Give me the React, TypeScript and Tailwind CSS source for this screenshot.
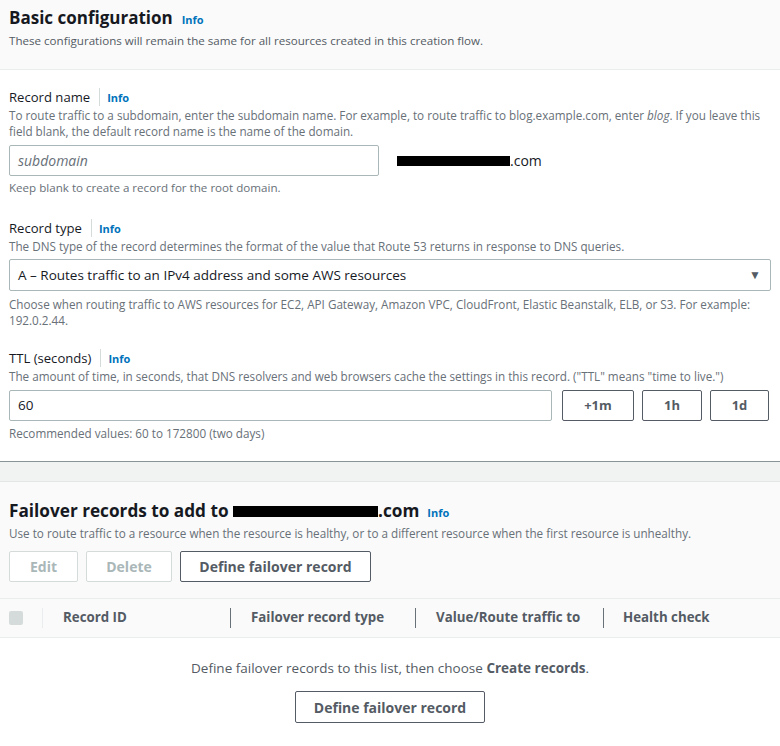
import React from "react";

const cond = "[font-stretch:92%]";

function Info() {
  return (
    <span className="text-[11px] font-bold text-[#0073bb] [font-stretch:100%]">
      Info
    </span>
  );
}

function FieldLabel({ children }: { children: React.ReactNode }) {
  return (
    <div className="flex items-center h-[18px]">
      <span className="text-[13.1px] text-[#16191f] [font-stretch:92%] pr-[9px] border-r border-[#d5dbdb] leading-[18px]">
        {children}
      </span>
      <span className="pl-[7px] leading-[18px]">
        <Info />
      </span>
    </div>
  );
}

function Redacted({ w, h }: { w: number; h: number }) {
  return (
    <span
      className="inline-block bg-black align-middle"
      style={{ width: w, height: h }}
    />
  );
}

const desc = "text-[11.7px] text-[#687078] leading-[16px] [font-stretch:92%]";

export default function App() {
  return (
    <div className="w-[780px] h-[746px] overflow-hidden bg-white font-['Open_Sans',sans-serif] text-[#16191f]">
      {/* Basic configuration header */}
      <div className="bg-[#fafafa] border-b border-[#eaeded] px-[9px] pt-[5px] h-[70px]">
        <div className="flex items-baseline gap-[9px]">
          <h2 className="text-[17px] font-bold leading-[26px]">Basic configuration</h2>
          <Info />
        </div>
        <p className="text-[11.6px] text-[#545b64] leading-[16px] mt-[2px]">
          These configurations will remain the same for all resources created in this creation flow.
        </p>
      </div>

      <div className="px-[9px] pt-[18px] pb-[20px]">
        {/* Record name */}
        <FieldLabel>Record name</FieldLabel>
        <p className={`${desc} mt-[1px]`}>
          To route traffic to a subdomain, enter the subdomain name. For example, to route traffic to blog.example.com, enter <i>blog</i>. If you leave this field blank, the default record name is the name of the domain.
        </p>
        <div className="flex items-center mt-[6px]">
          <div className="w-[370px] h-[31px] border border-[#aab7b8] rounded-[2px] flex items-center px-[8px]">
            <span className={`italic text-[14px] text-[#687078] ${cond}`}>subdomain</span>
          </div>
          <div className="ml-[18px] flex items-center text-[14px]">
            <Redacted w={113} h={10} />
            <span className={cond}>.com</span>
          </div>
        </div>
        <p className="text-[11.6px] text-[#687078] leading-[16px] mt-[4px]">
          Keep blank to create a record for the root domain.
        </p>

        {/* Record type */}
        <div className="mt-[23px]">
          <FieldLabel>Record type</FieldLabel>
        </div>
        <p className={`${desc} mt-[1px]`}>
          The DNS type of the record determines the format of the value that Route 53 returns in response to DNS queries.
        </p>
        <div className="mt-[5px] h-[32px] border border-[#aab7b8] rounded-[2px] flex items-center justify-between pl-[8px] pr-[9px]">
          <span className={`text-[13.5px] ${cond}`}>A – Routes traffic to an IPv4 address and some AWS resources</span>
          <span className="text-[12px] text-[#545b64] leading-none">▼</span>
        </div>
        <p className={`${desc} mt-[5px]`}>
          Choose when routing traffic to AWS resources for EC2, API Gateway, Amazon VPC, CloudFront, Elastic Beanstalk, ELB, or S3. For example: 192.0.2.44.
        </p>

        {/* TTL */}
        <div className="mt-[21px]">
          <FieldLabel>TTL (seconds)</FieldLabel>
        </div>
        <p className={`${desc} mt-[1px]`}>
          The amount of time, in seconds, that DNS resolvers and web browsers cache the settings in this record. ("TTL" means "time to live.")
        </p>
        <div className="flex items-center mt-[6px] gap-[8px]">
          <div className="w-[543px] h-[31px] border border-[#aab7b8] rounded-[2px] flex items-center px-[8px] mr-[2px]">
            <span className={`text-[13.5px] ${cond}`}>60</span>
          </div>
          <button className="w-[72px] h-[31px] border border-[#545b64] rounded-[2px] text-[13px] font-bold text-[#545b64]">+1m</button>
          <button className="w-[60px] h-[31px] border border-[#545b64] rounded-[2px] text-[13px] font-bold text-[#545b64]">1h</button>
          <button className="w-[59px] h-[31px] border border-[#545b64] rounded-[2px] text-[13px] font-bold text-[#545b64]">1d</button>
        </div>
        <p className={`${desc} mt-[4px]`}>
          Recommended values: 60 to 172800 (two days)
        </p>
      </div>

      {/* gap */}
      <div className="border-t border-[#879596] bg-[#f1f2f2] h-[21px] border-b border-b-[#e3e6e6]" />

      {/* Failover section */}
      <div className="bg-[#fafafa] px-[9px] pt-[16px] pb-[16px] border-b border-[#eaeded]">
        <div className="flex items-baseline gap-[8px]">
          <h2 className="text-[17.2px] font-bold leading-[26px] [font-stretch:92%] flex items-center">
            Failover records to add to&nbsp;<Redacted w={145} h={11} />.com
          </h2>
          <Info />
        </div>
        <p className={`${desc} text-[#545b64] mt-[1px]`}>
          Use to route traffic to a resource when the resource is healthy, or to a different resource when the first resource is unhealthy.
        </p>
        <div className="flex gap-[8px] mt-[10px]">
          <button className="w-[69px] h-[31px] border border-[#d5dbdb] rounded-[2px] text-[14px] font-bold text-[#aab7b8] bg-white">Edit</button>
          <button className="w-[86px] h-[31px] border border-[#d5dbdb] rounded-[2px] text-[14px] font-bold text-[#aab7b8] bg-white">Delete</button>
          <button className="w-[191px] h-[31px] border border-[#545b64] rounded-[2px] text-[14px] font-bold text-[#545b64] bg-white">Define failover record</button>
        </div>
      </div>

      {/* Table header */}
      <div className="bg-[#fafafa] border-b border-[#eaeded] h-[39px] flex items-center text-[13.3px] font-bold text-[#545b64] [font-stretch:92%]">
        <div className="w-[42px] flex items-center pl-[9px]">
          <span className="w-[14px] h-[14px] bg-[#d5dbdb] rounded-[2px]" />
        </div>
        <div className="w-[188px] h-[20px] border-l border-[#eaeded] pl-[20px] flex items-center">Record ID</div>
        <div className="w-[185px] h-[20px] border-l border-[#687078] pl-[20px] flex items-center">Failover record type</div>
        <div className="w-[188px] h-[20px] border-l border-[#687078] pl-[20px] flex items-center">Value/Route traffic to</div>
        <div className="h-[20px] border-l border-[#687078] pl-[19px] flex items-center">Health check</div>
      </div>

      {/* Empty state */}
      <div className="flex flex-col items-center pt-[20px]">
        <p className="text-[13.5px] leading-[20px] text-[#545b64]">
          Define failover records to this list, then choose <b>Create records</b>.
        </p>
        <button className="mt-[13px] w-[190px] h-[32px] border border-[#545b64] rounded-[2px] text-[14px] font-bold text-[#545b64]">
          Define failover record
        </button>
      </div>
    </div>
  );
}
